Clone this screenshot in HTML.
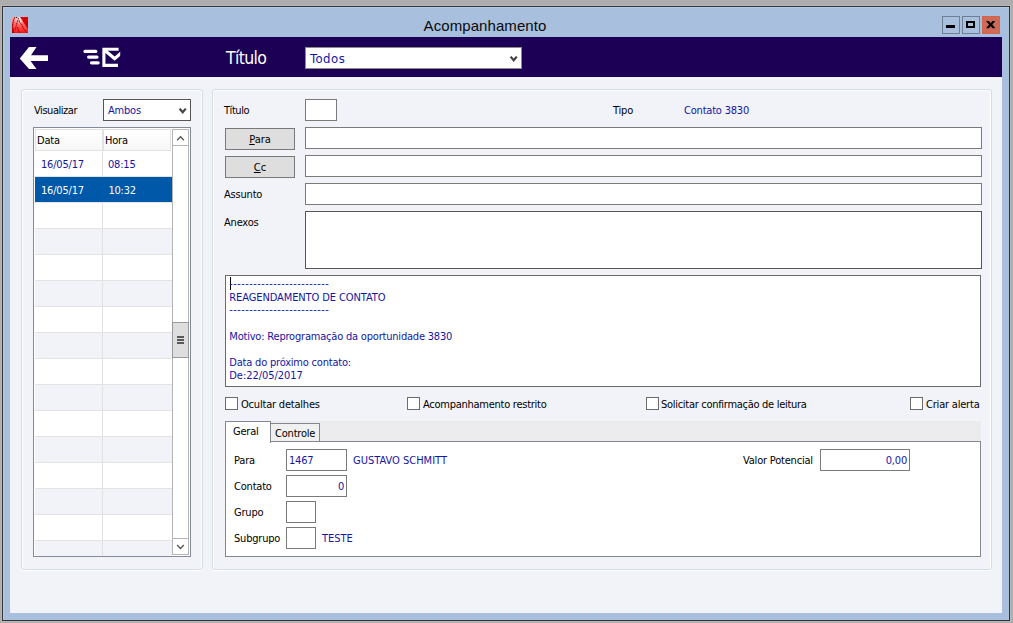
<!DOCTYPE html>
<html lang="pt-BR">
<head>
<meta charset="utf-8">
<title>Acompanhamento</title>
<style>
*{box-sizing:border-box;margin:0;padding:0}
html,body{width:1013px;height:623px;overflow:hidden;background:#adadad}
body{position:relative;font-family:"DejaVu Sans Condensed","Liberation Sans",sans-serif;font-size:11px;color:#000}
.abs,.abs>*{position:absolute}
#win{position:absolute;left:2px;top:6px;width:1008px;height:615px;border:1px solid #333;background:#a8c0de;outline:1px solid #b7b7b7}
#hl{position:absolute;left:3px;top:7px;width:1006px;height:613px;border-left:1px solid #b3cbea;border-top:1px solid #b3cbea}
#title{position:absolute;left:0;top:16px;width:970px;text-align:center;font-family:"Liberation Sans",sans-serif;font-size:15px;line-height:20px;color:#0a0a0a;letter-spacing:0.08px}
#tool{position:absolute;left:10px;top:37px;width:992px;height:40px;background:#1c0056}
#content{position:absolute;left:10px;top:77px;width:992px;height:536px;background:#f2f3f9}
.wb{position:absolute;top:16px;width:18px;height:18px;border:1px solid #6e7f96}
.gb{position:absolute;border:1px solid #d3dde4;border-radius:3px;box-shadow:inset 1px 1px 0 #fff,inset -1px 0 0 #fff,0 1px 0 #fff}
.inp{position:absolute;background:#fff;border:1px solid #7a7a7a;height:22px}
.lbl{position:absolute;white-space:nowrap;line-height:13px;letter-spacing:-0.2px}
.uc{letter-spacing:0}
.blue{color:#1515a2}
.btn{position:absolute;background:#dedede;border:1px solid #787878;height:22px;text-align:center;line-height:20px;padding-top:1px}
.cb{position:absolute;width:13px;height:13px;background:#fff;border:1px solid #6c6c6c}
</style>
</head>
<body>
<div id="win"></div>
<div id="hl"></div>
<!-- app icon -->
<svg style="position:absolute;left:12px;top:17px" width="16" height="16" viewBox="0 0 16 16">
  <defs>
    <linearGradient id="ig0" x1="0" y1="0" x2="0" y2="1"><stop offset="0" stop-color="#e00000"/><stop offset="1" stop-color="#b80000"/></linearGradient>
    <linearGradient id="ig" x1="0" y1="0" x2="0" y2="1"><stop offset="0" stop-color="#ffa0a0"/><stop offset="0.6" stop-color="#ff5252"/><stop offset="1" stop-color="#ff1010"/></linearGradient>
    <radialGradient id="ig2" cx="7.2" cy="2.2" r="5.5" gradientUnits="userSpaceOnUse"><stop offset="0" stop-color="#fff" stop-opacity=".95"/><stop offset="1" stop-color="#fff" stop-opacity="0"/></radialGradient>
  </defs>
  <rect width="16" height="16" fill="url(#ig0)"/>
  <path d="M0 0 L8 0 L16 12.3 L16 16 L0 16 Z" fill="url(#ig)"/>
  <path d="M0 0 L8 0 L16 12.3 L16 16 L0 16 Z" fill="url(#ig2)"/>
  <path d="M0 5 L2.6 16 L0 16 Z" fill="#a80000" opacity=".85"/>
  <g stroke="#8c0000" stroke-width="1" stroke-dasharray="0.9 1.4" fill="none" stroke-linecap="round">
    <path d="M2.6 0.6 L1.4 4 L0.6 9"/>
    <path d="M5.6 3.6 Q4.4 8 3.2 12.6"/>
    <path d="M4.3 0.4 L6.4 1.4 L7.6 5.4 L9.5 7.4 L11.4 11.4 L14.4 15.2"/>
    <path d="M5.4 10.4 L6.4 13.3 L7.6 15.6"/>
  </g>
</svg>
<div id="title">Acompanhamento</div>
<!-- window buttons -->
<div class="wb" style="left:942px"><div style="position:absolute;left:3px;top:8px;width:9px;height:3px;background:#000"></div></div>
<div class="wb" style="left:962px"><div style="position:absolute;left:3px;top:4px;width:9px;height:7px;border:2px solid #000"></div></div>
<div class="wb" style="left:982px;background:#cf6a55;border-color:#d0644e">
  <svg style="position:absolute;left:3px;top:4px" width="10" height="8" viewBox="0 0 10 8"><polygon points="0,0 3,0 4.7,2.2 6.4,0 9.4,0 6.3,3.6 9.4,7.2 6.4,7.2 4.7,5 3,7.2 0,7.2 3.1,3.6" fill="#000"/></svg>
</div>
<div id="tool"></div>
<div id="content"></div>

<!-- toolbar icons -->
<svg style="position:absolute;left:10px;top:37px" width="130" height="40" viewBox="10 37 130 40">
  <polygon points="19.8,58.5 29,47 36.5,47 31,55.2 48,55.2 48,61 30.6,61 36.5,69 29,69" fill="#fff"/>
  <g stroke="#fff" stroke-width="3.2" stroke-linecap="round" fill="none">
    <path d="M85 51.4 H95.8"/>
    <path d="M88.6 57.1 H97"/>
    <path d="M91.5 62.8 H98.2"/>
  </g>
  <path d="M118.6 49.3 H103.9 V65.4 H118" stroke="#fff" stroke-width="3.1" fill="none" stroke-linejoin="miter"/>
  <clipPath id="vc"><rect x="100" y="45" width="20.2" height="25"/></clipPath><path d="M104.6 50.3 L114.6 58.6 L122 52.3" stroke="#fff" stroke-width="3.2" fill="none" clip-path="url(#vc)"/>
</svg>
<div class="lbl" style="left:226px;top:47px;font-size:17.5px;line-height:22px;color:#fff;letter-spacing:-0.65px">Título</div>
<div class="inp" style="left:305px;top:47px;width:217px;height:22px;border-color:#8c8c84"></div>
<div class="lbl blue" style="left:310px;top:51px;font-size:13px;line-height:16px;color:#1414a8;letter-spacing:0.5px">Todos</div>
<svg style="position:absolute;left:509px;top:55px" width="10" height="8" viewBox="0 0 10 8"><path d="M1.6 1.6 L4.7 5.3 L7.8 1.6" stroke="#444" stroke-width="2.2" fill="none"/></svg>

<!-- left group -->
<div class="gb" style="left:21px;top:89px;width:182px;height:481px"></div>
<div class="lbl" style="left:34px;top:104px;letter-spacing:-0.45px">Visualizar</div>
<div class="inp" style="left:103px;top:99px;width:88px;height:22px;border-color:#555"></div>
<div class="lbl blue" style="left:108px;top:104px">Ambos</div>
<svg style="position:absolute;left:178px;top:107px" width="10" height="8" viewBox="0 0 10 8"><path d="M1.6 1.6 L4.7 5.3 L7.8 1.6" stroke="#444" stroke-width="2.2" fill="none"/></svg>
<div id="list" style="position:absolute;left:33px;top:127px;width:158px;height:430px;border:1px solid #848b98;background:#fff;overflow:hidden">
  <div id="rows" style="position:absolute;left:1px;top:23px;width:137px;height:405px;background:repeating-linear-gradient(to bottom,#fff 0,#fff 25px,#e3e3e3 25px,#e3e3e3 26px,#f2f3f9 26px,#f2f3f9 51px,#e3e3e3 51px,#e3e3e3 52px)"></div>
  <div style="position:absolute;left:68px;top:23px;width:1px;height:405px;background:#e1e1e1"></div>
  <div style="position:absolute;left:1px;top:49px;width:137px;height:25px;background:#0058a8"></div>
  <div style="position:absolute;left:1px;top:1px;width:136px;height:22px;border:1px solid #e2e2e2;background:linear-gradient(#fff,#f7f7f7)"></div>
  <div style="position:absolute;left:68px;top:1px;width:2px;height:22px;background:#e2e2e2"></div>
  <div class="lbl" style="left:3px;top:6px">Data</div>
  <div class="lbl" style="left:71px;top:6px">Hora</div>
  <div class="lbl blue" style="left:7px;top:30px">16/05/17</div>
  <div class="lbl blue" style="left:74px;top:30px">08:15</div>
  <div class="lbl" style="left:7px;top:56px;color:#fff">16/05/17</div>
  <div class="lbl" style="left:74.4px;top:56px;color:#fff">10:32</div>
  <!-- scrollbar -->
  <div style="position:absolute;left:138px;top:1px;width:17px;height:426px;background:#fff;border:1px solid #b4b4b4"></div>
  <div style="position:absolute;left:138px;top:1px;width:17px;height:17px;border:1px solid #b4b4b4;background:#fff"></div>
  <svg style="position:absolute;left:142px;top:7px" width="9" height="6" viewBox="0 0 9 6"><path d="M1.1 5.3 L4.5 1.8 L7.9 5.3" stroke="#555" stroke-width="1.3" fill="none"/></svg>
  <div style="position:absolute;left:138px;top:410px;width:17px;height:17px;border:1px solid #b4b4b4;background:#fff"></div>
  <svg style="position:absolute;left:142px;top:416px" width="9" height="6" viewBox="0 0 9 6"><path d="M1.1 1 L4.5 4.5 L7.9 1" stroke="#555" stroke-width="1.3" fill="none"/></svg>
  <div style="position:absolute;left:138px;top:194px;width:17px;height:36px;border:1px solid #9a9a9a;background:#dedede"></div>
  <div style="position:absolute;left:143px;top:208px;width:7px;height:2px;background:#5a5a5a;box-shadow:0 3px 0 #5a5a5a,0 6px 0 #5a5a5a"></div>
</div>

<!-- right group -->
<div class="gb" style="left:212px;top:89px;width:780px;height:481px"></div>
<div class="lbl" style="left:224px;top:104px;letter-spacing:-0.45px">Título</div>
<div class="inp" style="left:305px;top:99px;width:32px;height:22px"></div>
<div class="lbl" style="left:613px;top:104px">Tipo</div>
<div class="lbl blue" style="left:684px;top:104px">Contato 3830</div>
<div class="btn" style="left:225px;top:128px;width:70px"><u>P</u>ara</div>
<div class="inp" style="left:305px;top:127px;width:677px"></div>
<div class="btn" style="left:225px;top:156px;width:70px"><u>C</u>c</div>
<div class="inp" style="left:305px;top:155px;width:677px"></div>
<div class="lbl" style="left:224px;top:188px">Assunto</div>
<div class="inp" style="left:305px;top:183px;width:677px"></div>
<div class="lbl" style="left:224px;top:216px">Anexos</div>
<div class="inp" style="left:305px;top:211px;width:677px;height:58px;border-color:#555"></div>
<div class="inp" style="left:225px;top:275px;width:756px;height:112px;border-color:#6a6a6a"></div>
<div style="position:absolute;left:230px;top:277px;width:1px;height:13px;background:#000"></div>
<pre class="lbl blue" style="left:229.3px;top:278px;font-family:inherit;font-size:11px;line-height:13px;white-space:pre"><span style="letter-spacing:0.43px;position:relative;top:-1px">-------------------------</span>
<span style="letter-spacing:-0.1px">REAGENDAMENTO DE CONTATO</span>
<span style="letter-spacing:0.43px;position:relative;top:-1px">-------------------------</span>

Motivo: Reprogramação da oportunidade 3830

Data do próximo contato:
<span style="letter-spacing:-0.05px">De:22/05/2017</span></pre>
<div class="cb" style="left:225px;top:397px"></div><div class="lbl" style="left:241px;top:398px">Ocultar detalhes</div>
<div class="cb" style="left:407px;top:397px"></div><div class="lbl" style="left:423px;top:398px;letter-spacing:-0.26px">Acompanhamento restrito</div>
<div class="cb" style="left:646px;top:397px"></div><div class="lbl" style="left:661px;top:398px;letter-spacing:-0.29px">Solicitar confirmação de leitura</div>
<div class="cb" style="left:910px;top:397px"></div><div class="lbl" style="left:926px;top:398px">Criar alerta</div>
<!-- tabs -->
<div style="position:absolute;left:225px;top:421px;width:756px;height:21px;background:#ececee"></div>
<div style="position:absolute;left:225px;top:441px;width:756px;height:116px;background:#fff;border:1px solid #828790"></div>
<div style="position:absolute;left:270px;top:423px;width:50px;height:19px;background:#f0f0f0;border:1px solid #828790"></div>
<div class="lbl" style="left:275px;top:427px">Controle</div>
<div style="position:absolute;left:225px;top:421px;width:46px;height:22px;background:#fff;border:1px solid #828790;border-bottom:none"></div>
<div class="lbl" style="left:233px;top:425px">Geral</div>
<div class="lbl" style="left:234px;top:454px">Para</div>
<div class="inp" style="left:286px;top:449px;width:61px"></div>
<div class="lbl blue" style="left:289px;top:454px">1467</div>
<div class="lbl blue uc" style="left:353px;top:454px">GUSTAVO SCHMITT</div>
<div class="lbl" style="left:234px;top:480px">Contato</div>
<div class="inp" style="left:286px;top:475px;width:61px"></div>
<div class="lbl blue" style="left:286px;top:480px;width:58px;text-align:right">0</div>
<div class="lbl" style="left:234px;top:506px">Grupo</div>
<div class="inp" style="left:286px;top:501px;width:30px"></div>
<div class="lbl" style="left:234px;top:532px">Subgrupo</div>
<div class="inp" style="left:286px;top:527px;width:30px"></div>
<div class="lbl blue uc" style="left:322px;top:532px">TESTE</div>
<div class="lbl" style="left:743px;top:454px">Valor Potencial</div>
<div class="inp" style="left:820px;top:449px;width:90px"></div>
<div class="lbl blue" style="left:820px;top:454px;width:87px;text-align:right">0,00</div>
</body>
</html>
